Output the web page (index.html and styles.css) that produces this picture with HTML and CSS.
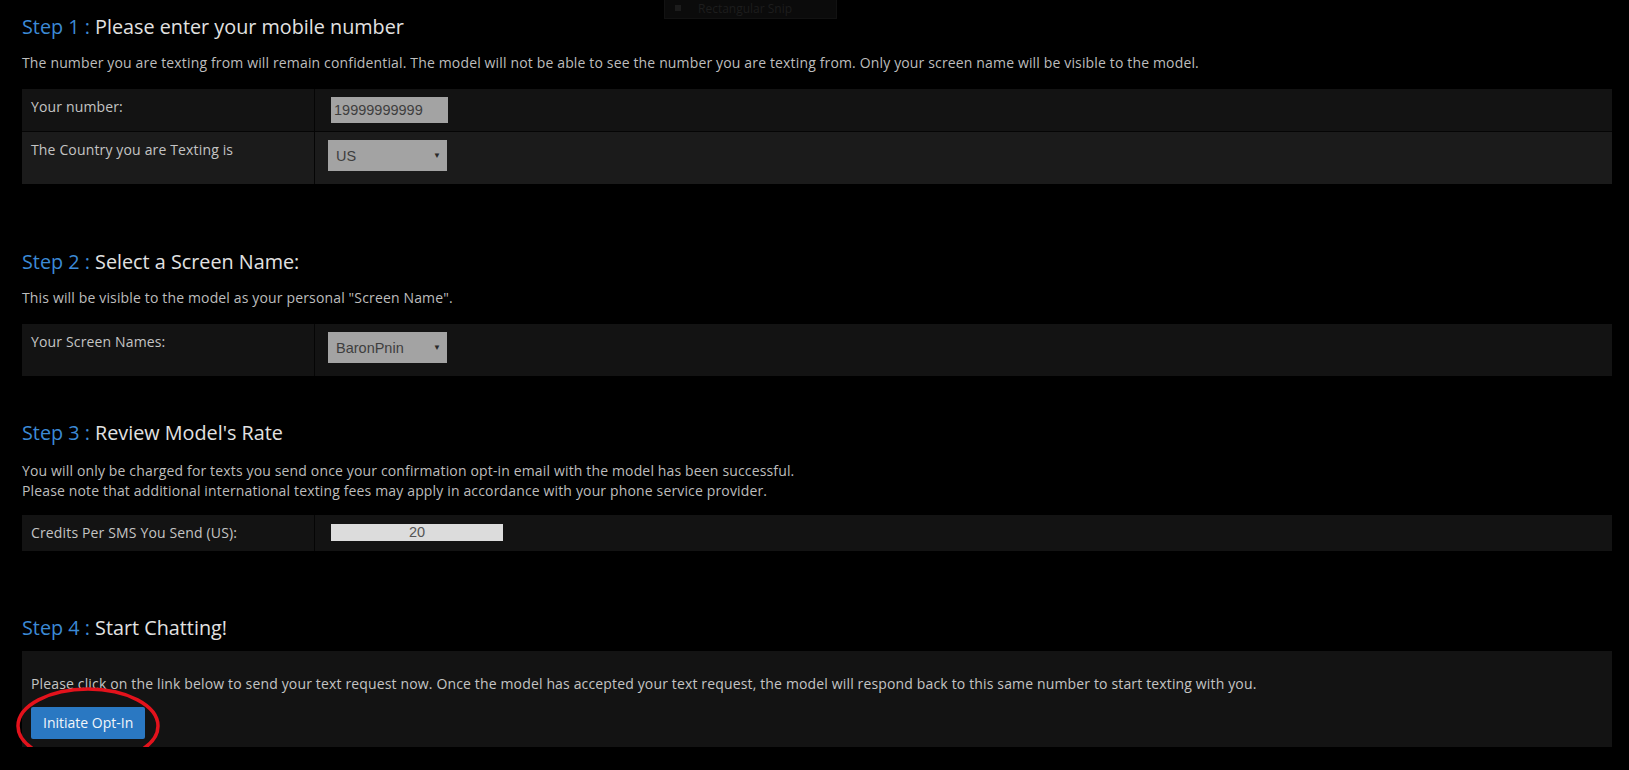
FILE: index.html
```html
<!DOCTYPE html>
<html>
  <head>
    <title>Text Chat Opt-In</title>
    <link rel="stylesheet" href="styles.css">
  </head>
  <body>
    <div class="snip-bar"><span class="snip-icon"></span>Rectangular Snip</div>
    <div class="wrapper">
      <div class="step step-1">
        <h3><span class="step-no">Step 1 :</span> Please enter your mobile number</h3>
        <p class="intro">The number you are texting from will remain confidential. The model will not be able to see the number you are texting from. Only your screen name will be visible to the model.</p>
        <table class="opt-table">
          <tr>
            <td class="label-cell">Your number:</td>
            <td><input type="text" class="phone-input" value="19999999999"></td>
          </tr>
          <tr class="alt">
            <td class="label-cell">The Country you are Texting is</td>
            <td>
              <span class="select-wrap">
                <select><option>US</option></select>
              </span>
            </td>
          </tr>
        </table>
      </div>

      <div class="step step-2">
        <h3><span class="step-no">Step 2 :</span> Select a Screen Name:</h3>
        <p class="intro">This will be visible to the model as your personal "Screen Name".</p>
        <table class="opt-table">
          <tr>
            <td class="label-cell">Your Screen Names:</td>
            <td>
              <span class="select-wrap">
                <select><option>BaronPnin</option></select>
              </span>
            </td>
          </tr>
        </table>
      </div>

      <div class="step step-3">
        <h3><span class="step-no">Step 3 :</span> Review Model's Rate</h3>
        <p class="intro">You will only be charged for texts you send once your confirmation opt-in email with the model has been successful.<br>Please note that additional international texting fees may apply in accordance with your phone service provider.</p>
        <table class="opt-table">
          <tr>
            <td class="label-cell">Credits Per SMS You Send (US):</td>
            <td><input type="text" class="rate-input" value="20" readonly></td>
          </tr>
        </table>
      </div>

      <div class="step step-4">
        <h3><span class="step-no">Step 4 :</span> Start Chatting!</h3>
        <div class="chat-box">
          <p>Please click on the link below to send your text request now. Once the model has accepted your text request, the model will respond back to this same number to start texting with you.</p>
          <a href="#" class="btn-optin">Initiate Opt-In</a>
          <!-- red marker drawn over the screenshot -->
          <svg class="marker" width="156" height="86" viewBox="0 0 156 86">
            <ellipse cx="77" cy="41" rx="70" ry="37" fill="none" stroke="#e3121c" stroke-width="3.5"/>
          </svg>
        </div>
      </div>
    </div>
  </body>
</html>
```

FILE: styles.css
```css
body {
  background-color: #000;
  color: #bdbdbd;
  font-family: 'Open Sans', sans-serif;
  font-size: 14px;
  line-height: 20px;
  letter-spacing: 0.15px;
  margin: 0;
  position: relative;
}
.wrapper {
  width: 1590px;
  margin-left: 22px;
  padding-top: 14px;
}
h3 {
  font-size: 19.8px;
  font-weight: normal;
  line-height: 26px;
  letter-spacing: 0;
  color: #e2e2e2;
  margin: 0 0 13px;
}
.step-no {
  color: #3c8ad6;
}
.intro {
  margin: 0 0 16px;
}
.step-1 {
  margin-bottom: 65px;
}
.step-2 {
  margin-bottom: 44px;
}
.step-3 h3 {
  margin-bottom: 15px;
}
.step-3 .intro {
  margin-bottom: 14px;
}
.step-3 {
  margin-bottom: 64px;
}
.step-4 h3 {
  margin-bottom: 10px;
}
.opt-table {
  width: 100%;
  border-spacing: 0;
}
.opt-table td {
  padding: 8px 9px;
  vertical-align: top;
  background-color: #131313;
  color: #c4c4c4;
}
.opt-table td.label-cell {
  width: 274px;
  border-right: 1px solid #050505;
}
.opt-table tr.alt td {
  background-color: #1b1b1b;
  border-top: 1px solid #050505;
}
.phone-input {
  display: block;
  width: 117px;
  height: 26px;
  margin-left: 7px;
  padding: 0 3px;
  border: none;
  box-sizing: border-box;
  background-color: #a3a3a3;
  color: #3e3e3e;
  font-family: 'Liberation Sans', Arial, sans-serif;
  font-size: 14.5px;
  letter-spacing: 0;
}
.select-wrap {
  display: block;
  position: relative;
  width: 119px;
  margin: 0 0 5px 4px;
}
.select-wrap select {
  display: block;
  width: 119px;
  height: 31px;
  padding: 0 8px;
  border: none;
  border-radius: 0;
  -webkit-appearance: none;
  appearance: none;
  background-color: #a3a3a3;
  color: #3e3e3e;
  font-family: 'Liberation Sans', Arial, sans-serif;
  font-size: 14.5px;
  letter-spacing: 0;
}
.select-wrap::after {
  content: "\25BC";
  position: absolute;
  right: 6px;
  top: 10px;
  font-size: 8px;
  line-height: 10px;
  color: #2a2a2a;
}
.rate-input {
  display: block;
  width: 172px;
  height: 17px;
  margin: 1px 0 0 7px;
  padding: 0;
  border: none;
  box-sizing: border-box;
  background-color: #dcdcdc;
  color: #555;
  text-align: center;
  font-family: 'Liberation Sans', Arial, sans-serif;
  font-size: 14.5px;
  line-height: 17px;
  letter-spacing: 0;
}
.chat-box {
  position: relative;
  background-color: #131313;
  padding: 23px 9px 8px;
}
.chat-box p {
  margin: 0 0 13px;
  color: #c4c4c4;
}
.btn-optin {
  display: inline-block;
  padding: 6px 12px;
  background-color: #2a78c2;
  color: #f2f6fa;
  text-decoration: none;
  border-radius: 2px;
  font-size: 14px;
  line-height: 20px;
  letter-spacing: 0;
}
.marker {
  position: absolute;
  left: -11px;
  top: 34px;
}
.snip-bar {
  position: absolute;
  left: 664px;
  top: 0;
  width: 173px;
  height: 19px;
  box-sizing: border-box;
  background-color: #0b0b0b;
  border: 1px solid #121212;
  border-top: none;
  color: #1d1d1d;
  font-size: 12px;
  line-height: 17px;
  letter-spacing: 0;
  padding-left: 33px;
}
.snip-icon {
  position: absolute;
  left: 10px;
  top: 5px;
  width: 6px;
  height: 6px;
  background-color: #1c1c1c;
}
```
